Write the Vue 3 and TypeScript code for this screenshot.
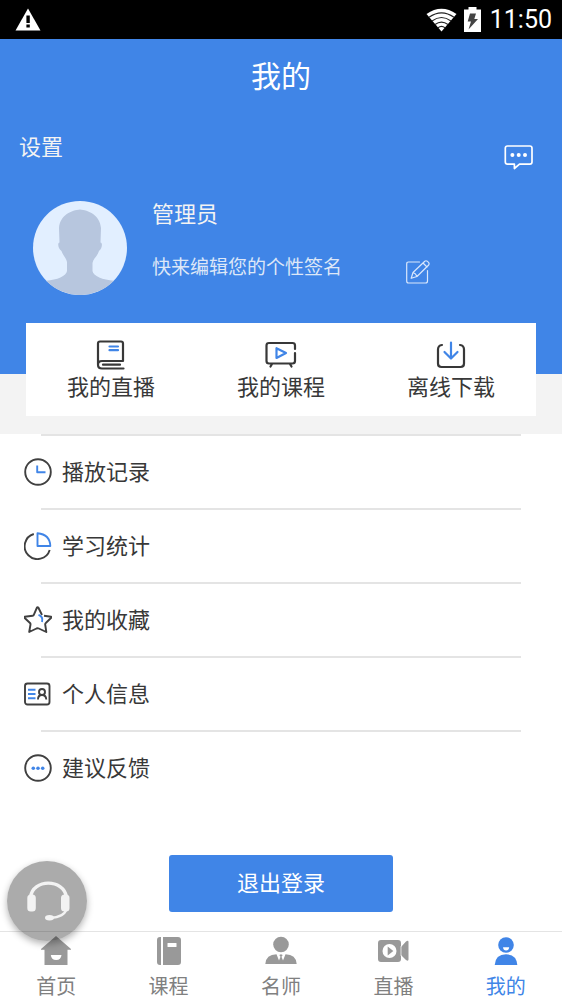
<script setup lang="ts">
import { ref } from 'vue'

type TabKey = 'home' | 'course' | 'teacher' | 'live' | 'mine'

const shortcuts = [
  { key: 'live', label: '我的直播' },
  { key: 'course', label: '我的课程' },
  { key: 'download', label: '离线下载' },
]

const entries = [
  { key: 'history', label: '播放记录' },
  { key: 'stats', label: '学习统计' },
  { key: 'favorite', label: '我的收藏' },
  { key: 'profile', label: '个人信息' },
  { key: 'feedback', label: '建议反馈' },
]

const tabs: { key: TabKey; label: string }[] = [
  { key: 'home', label: '首页' },
  { key: 'course', label: '课程' },
  { key: 'teacher', label: '名师' },
  { key: 'live', label: '直播' },
  { key: 'mine', label: '我的' },
]

const activeTab = ref<TabKey>('mine')
</script>

<template>
  <div class="screen">
    <div class="status-bar">
      <svg class="warning" width="26" height="23" viewBox="0 0 26 23">
        <path d="M13 0.5 25.5 22.5H0.5Z" fill="#fff" />
        <path d="M11.4 7.5h3.4v7.5h-3.4zM11.4 16.4h3.4v3h-3.4z" fill="#000" />
      </svg>
      <svg width="31" height="24" viewBox="0 0 31 24">
        <path d="M0.5 6Q15.5 -4.5 30.5 6L15.5 23.5Z" fill="#fff" />
        <g fill="none" stroke="#222" stroke-width="1.1">
          <path d="M3 9.3Q15.5 0.5 28 9.3" />
          <path d="M6 13Q15.5 6 25 13" />
          <path d="M9 16.5Q15.5 11.7 22 16.5" />
          <path d="M12 19.8Q15.5 17 19 19.8" />
        </g>
      </svg>
      <svg width="17" height="25" viewBox="0 0 17 25">
        <path d="M0 2.5H4.5V0H12.5V2.5H17V25H0Z" fill="#fff" />
        <path d="M6 6.5H12L10.3 12H14L4.5 22.5L7 14.5H3.7Z" fill="#444" />
      </svg>
      <time class="clock">11:50</time>
    </div>

    <header class="header">
      <h1 class="title">我的</h1>
      <div class="toolbar">
        <button class="settings" type="button">设置</button>
        <button class="icon-button" type="button" aria-label="消息">
          <svg width="30" height="25" viewBox="0 0 30 25" fill="none" stroke="#fff" stroke-width="1.7" stroke-linejoin="round">
            <path d="M3.500 1H25.8Q28 1 28 3.2V17Q28 19.2 25.8 19.2H15.5L10.4 23.5V19.2H3.5Q1.3 19.2 1.3 17V3.2Q1.3 1 3.5 1Z" />
            <g fill="#fff" stroke="none">
              <circle cx="8.4" cy="10" r="2" /><circle cx="14.7" cy="10" r="2" /><circle cx="21" cy="10" r="2" />
            </g>
          </svg>
        </button>
      </div>
      <div class="profile">
        <svg class="avatar" width="94" height="94" viewBox="0 0 94 94">
          <circle cx="47" cy="47" r="47" fill="#e2efff" />
          <path
            d="M47 8.5C55 9 67 14 68 27L67.5 41.5C70 41.5 69 48 66 50C64.5 55 60 58 59.5 62V70C60 75 70 79 80.8 79.7A47 47 0 0 1 13.2 79.7C24 79 33.5 75 34 70V61C33.5 57 29.5 54 28.5 50C25.5 48 24 42 26.5 41.5L26 27C27 14 39 9 47 8.5Z"
            fill="#b7c6de"
          />
        </svg>
        <div class="identity">
          <p class="name">管理员</p>
          <p class="signature">快来编辑您的个性签名</p>
        </div>
        <button class="icon-button edit" type="button" aria-label="编辑签名">
          <svg width="24" height="24" viewBox="0 0 24 24" fill="none" stroke="#d9e7fc" stroke-width="1.2" stroke-linejoin="round" stroke-linecap="round">
            <path d="M13.5 2H2.5Q0.7 2 0.7 4V21Q0.7 23 2.5 23H19.5Q21.5 23 21.5 21V10.5" />
            <path d="M5.2 18.3L7 12.5L18.8 1.2Q20 0.3 21.2 1.2L22.7 2.7Q23.5 3.8 22.7 5L11 16.5ZM7 12.5Q9.8 13.3 11 16.5M17 3L21 7" />
          </svg>
        </button>
      </div>
    </header>

    <section class="shortcut-band">
      <div class="shortcuts">
        <button v-for="item in shortcuts" :key="item.key" class="shortcut" type="button">
          <svg width="32" height="30" viewBox="0 0 32 30" fill="none" stroke="#383838" stroke-width="2.2" stroke-linecap="round" stroke-linejoin="round">
            <template v-if="item.key === 'live'">
              <path d="M3 24V3.5Q3 1.5 5 1.5H26Q28 1.5 28 3.5V21H7Q3 21 3 24.7Q3 28.5 7 28.5H28.5M8 24.7H25" />
              <path d="M14.5 6.5H23M14.5 10.2H23" stroke="#4085e7" />
            </template>
            <template v-else-if="item.key === 'course'">
              <path d="M30 9V5.5Q30 3 27.5 3H4Q1.5 3 1.5 5.5V21Q1.5 23.5 4 23.5H27.5Q30 23.5 30 21V13M7 24L5.5 26.5M25 24L26.5 26.5" />
              <path d="M11.5 8.2V18L21 13Z" stroke="#4085e7" />
            </template>
            <template v-else>
              <path d="M7 5Q3 5.5 3 9.5V23.5Q3 27 6.5 27H25.5Q29 27 29 23.5V9.5Q29 5.5 25 5" />
              <path d="M16 2.5V18M9.5 12L16 18.5L22.5 12" stroke="#4085e7" />
            </template>
          </svg>
          <span>{{ item.label }}</span>
        </button>
      </div>
    </section>

    <main class="content">
      <ul class="entries">
        <li v-for="entry in entries" :key="entry.key">
          <button class="entry" type="button">
            <svg width="28" height="28" viewBox="0 0 28 28" fill="none" stroke="#404040" stroke-width="1.9" stroke-linejoin="round">
              <template v-if="entry.key === 'history'">
                <circle cx="14" cy="14" r="12.8" />
                <path d="M13.2 7.5V14.3H21.5" stroke="#4085e7" />
              </template>
              <template v-else-if="entry.key === 'stats'">
                <path d="M9.8 2A12.8 12.8 0 1 0 25.7 18" />
                <path d="M13.5 1.3V14H26.3Q26 2.5 13.5 1.3Z" stroke="#4085e7" />
              </template>
              <template v-else-if="entry.key === 'favorite'">
                <path d="M18 9L14.3 1.500Q13.700 0.700 13 1.500L9.800 8.800Q9.500 9.600 8.700 9.700L0.600 10.700Q0 11.200 0.500 11.800L6 17Q6.600 17.600 6.500 18.500L5.200 26L12.500 22.500Q13.700 22 14.800 22.500L22.300 26L21.200 18.500Q21.100 17.600 21.800 17L27.200 11.800Q27.700 11 27 10.700L20 9.800" />
                <path d="M14.5 8.8Q19.5 10.5 18 16" stroke="#4085e7" />
              </template>
              <template v-else-if="entry.key === 'profile'">
                <rect x="1" y="3.5" width="24.5" height="21" rx="2.5" />
                <path d="M4 9.8H11.5M4 14H11.5M4 18.3H11.5" stroke="#4085e7" />
                <circle cx="18" cy="12" r="3" />
                <path d="M14 19.5Q14 15 18 15Q22 15 22.3 19.5" />
              </template>
              <template v-else>
                <circle cx="14" cy="14" r="12.8" />
                <g fill="#4085e7" stroke="none">
                  <circle cx="9.3" cy="14.3" r="1.8" /><circle cx="14" cy="14.3" r="1.8" /><circle cx="18.7" cy="14.3" r="1.8" />
                </g>
              </template>
            </svg>
            <span>{{ entry.label }}</span>
          </button>
        </li>
      </ul>
      <button class="logout" type="button">退出登录</button>
    </main>

    <nav class="tab-bar">
      <button
        v-for="tab in tabs"
        :key="tab.key"
        class="tab"
        :class="{ active: tab.key === activeTab }"
        type="button"
        @click="activeTab = tab.key"
      >
        <svg width="32" height="30" viewBox="0 0 32 30" fill="currentColor">
          <template v-if="tab.key === 'home'">
            <path d="M16 0L31 13V13.8H27.5V29H4.5V13.8H1V13Z" />
            <path d="M10.8 19H21.5Q21 24 16.2 24Q11.3 24 10.8 19Z" fill="#fff" />
          </template>
          <template v-else-if="tab.key === 'course'">
            <path d="M8 1V29H7Q4 29 4 26V4Q4 1 7 1ZM10 1H25Q28 1 28 4V26Q28 29 25 29H10Z" />
            <rect x="14.5" y="7" width="9" height="4" rx="0.5" fill="#fff" />
          </template>
          <template v-else-if="tab.key === 'teacher'">
            <circle cx="16" cy="8.5" r="7.8" />
            <path d="M0.3 28Q1 18.5 11.5 18.3L14 24.5L15.5 20.8L14.3 19L16 18.3L17.7 19L16.5 20.8L18 24.5L20.5 18.3Q31 18.5 31.7 28Z" />
          </template>
          <template v-else-if="tab.key === 'live'">
            <path d="M4 4H21Q24 4 24 7V11L29 5.5Q31.5 4 31.5 6V23.5Q31.5 25.5 29 24L24 19V23Q24 26 21 26H4Q1 26 1 23V7Q1 4 4 4Z" />
            <path d="M24 10V20" stroke="#fff" stroke-width="0.7" />
            <circle cx="12.5" cy="15" r="7" fill="#fff" />
            <path d="M10.7 10.5V19.5L16.3 15Z" />
          </template>
          <template v-else>
            <circle cx="16" cy="9" r="7.8" />
            <path d="M4.7 29Q5.5 18.3 16 18.3Q26.5 18.3 27.3 29Z" />
            <path d="M13 11.3H19.2Q18.8 14.5 16.1 14.5Q13.4 14.5 13 11.3Z" fill="#fff" />
          </template>
        </svg>
        <span>{{ tab.label }}</span>
      </button>
    </nav>

    <button class="support" type="button" aria-label="在线客服">
      <svg width="80" height="80" viewBox="0 0 80 80" fill="none" stroke="#f3f3f3">
        <path d="M23.5 36C26 17.5 56.5 17.5 59.5 36" stroke-width="3.4" />
        <path d="M59.5 48Q57.5 56 43 57" stroke-width="2.4" />
        <g fill="#f3f3f3" stroke="none">
          <rect x="20.3" y="33.5" width="8.5" height="17" rx="3.5" />
          <rect x="54" y="33.5" width="8.5" height="17" rx="3.5" />
          <ellipse cx="42.5" cy="56.7" rx="4.5" ry="2.7" />
        </g>
      </svg>
    </button>
  </div>
</template>

<style>
body {
  margin: 0;
  background: #fff;
}
</style>

<style scoped>
.screen {
  display: flex;
  flex-direction: column;
  min-height: 100vh;
  font-family: Roboto, 'Noto Sans CJK SC', sans-serif;
  color: #383838;
}

button {
  margin: 0;
  padding: 0;
  border: 0;
  background: none;
  font: inherit;
  color: inherit;
  cursor: pointer;
}

svg {
  display: block;
  flex: none;
}

.status-bar {
  display: flex;
  align-items: center;
  gap: 7px;
  height: 39px;
  padding: 0 10px 0 15px;
  background: #000;
  color: #fff;
}

.warning {
  margin-right: auto;
}

.clock {
  margin-left: 2px;
  font-size: 25px;
  line-height: 40px;
}

.header {
  padding-bottom: 79px;
  background: #4085e7;
  color: #fff;
}

.title {
  margin: 0;
  font-size: 30px;
  font-weight: 400;
  line-height: 76px;
  text-align: center;
}

.toolbar {
  display: flex;
  justify-content: space-between;
  align-items: flex-end;
  height: 55px;
  padding: 0 28px 0 19px;
}

.settings {
  align-self: flex-start;
  margin-top: 17px;
  font-size: 22px;
  line-height: 32px;
  color: #f3f3f3;
}

.icon-button {
  display: block;
}

.profile {
  display: flex;
  align-items: flex-start;
  padding: 31px 28px 0 33px;
}

.identity {
  margin-left: 25px;
}

.name,
.signature {
  margin: 0;
}

.name {
  font-size: 22px;
  line-height: 28px;
  color: #f3f3f3;
}

.signature {
  margin-top: 25px;
  font-size: 19px;
  line-height: 28px;
  color: #dde7f7;
}

.edit {
  margin: 59px 0 0 64px;
}

.shortcut-band {
  padding: 0 26px 18px;
  background: #f3f3f3;
}

.shortcuts {
  display: grid;
  grid-template-columns: repeat(3, 1fr);
  margin-top: -51px;
  background: #fff;
}

.shortcut {
  display: flex;
  flex-direction: column;
  align-items: center;
  gap: 2px;
  padding: 17px 0 12px;
  font-size: 22px;
  line-height: 32px;
}

.content {
  display: flex;
  flex: 1;
  flex-direction: column;
  align-items: center;
  padding-bottom: 19px;
}

.entries {
  align-self: stretch;
  margin: 0;
  padding: 0;
  list-style: none;
}

.entries li::before {
  content: '';
  display: block;
  height: 2px;
  margin: 0 41px;
  background: #e4e4e4;
}

.entry {
  display: flex;
  align-items: center;
  gap: 10px;
  width: 100%;
  height: 72px;
  padding: 0 24px;
  font-size: 22px;
  line-height: 32px;
}

.entry span {
  padding-top: 2px;
}

.logout {
  width: 40%;
  margin-top: 51px;
  border-radius: 3px;
  background: #4085e7;
  font-size: 22px;
  line-height: 57px;
  color: #fff;
}

.tab-bar {
  display: grid;
  grid-template-columns: repeat(5, 1fr);
  border-top: 1px solid #e4e4e4;
  background: #fff;
}

.tab {
  display: flex;
  flex-direction: column;
  align-items: center;
  gap: 8px;
  padding-top: 4px;
  font-size: 20px;
  line-height: 26px;
  color: #999;
}

.tab span {
  color: #808080;
}

.tab.active,
.tab.active span {
  color: #4085e7;
}

.support {
  position: fixed;
  left: 7px;
  bottom: 59px;
  border-radius: 50%;
  background: rgba(0, 0, 0, 0.33);
  box-shadow: 0 3px 7px rgba(0, 0, 0, 0.3);
}
</style>
